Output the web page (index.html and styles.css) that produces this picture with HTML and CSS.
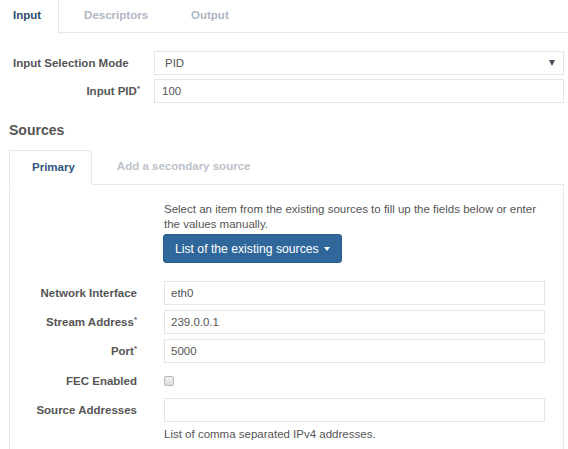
FILE: index.html
```html
<!DOCTYPE html>
<html>
<head>
<meta charset="utf-8">
<link rel="stylesheet" href="styles.css">
</head>
<body>
<nav class="tabs">
  <a class="tab active">Input</a>
  <a class="tab">Descriptors</a>
  <a class="tab">Output</a>
</nav>
<form class="main-form">
  <div class="row">
    <label class="lbl lbl-left">Input Selection Mode</label>
    <div class="select">
      <span>PID</span>
      <span class="caret-dark"></span>
    </div>
  </div>
  <div class="row">
    <label class="lbl">Input PID<sup>*</sup></label>
    <div class="input pid">100</div>
  </div>
</form>
<h3 class="section-title">Sources</h3>
<nav class="subtabs">
  <a class="subtab active">Primary</a>
  <a class="subtab">Add a secondary source</a>
</nav>
<div class="panel">
  <div class="prow">
    <div></div>
    <div class="intro">
      <p>Select an item from the existing sources to fill up the fields below or enter the values manually.</p>
      <button type="button" class="btn">List of the existing sources <span class="caret"></span></button>
    </div>
  </div>
  <div class="fields">
    <div class="prow">
      <label class="plbl">Network Interface</label>
      <div class="input">eth0</div>
    </div>
    <div class="prow">
      <label class="plbl">Stream Address<sup>*</sup></label>
      <div class="input">239.0.0.1</div>
    </div>
    <div class="prow">
      <label class="plbl">Port<sup>*</sup></label>
      <div class="input">5000</div>
    </div>
    <div class="prow fec">
      <label class="plbl">FEC Enabled</label>
      <div><span class="checkbox"></span></div>
    </div>
    <div class="prow">
      <label class="plbl">Source Addresses</label>
      <div class="input"></div>
    </div>
    <div class="prow">
      <div></div>
      <p class="help">List of comma separated IPv4 addresses.</p>
    </div>
  </div>
</div>
</body>
</html>
```
FILE: styles.css
```css
* { box-sizing: border-box; }
html, body { margin: 0; padding: 0; background: #fff; }
body {
  font-family: "Liberation Sans", Arial, sans-serif;
  font-size: 11.5px;
  color: #555;
  overflow: hidden;
}
sup { font-size: 8px; vertical-align: top; position: relative; top: -1px; }
.tabs {
  display: flex;
  height: 33px;
  border-bottom: 1px solid #e8e8e8;
}
.tab {
  display: block;
  height: 33px;
  line-height: 31px;
  font-weight: bold;
  color: #aeb6c1;
  padding: 0 21px;
}
.tab.active {
  color: #2c4a6c;
  padding: 0 17px 0 13px;
  border-right: 1px solid #e8e8e8;
  background: #fff;
  height: 34px;
}
.tab:nth-child(2) { padding: 0 22px 0 25px; }
.main-form { padding-top: 18px; }
.row {
  display: grid;
  grid-template-columns: 154px 410px;
  align-items: center;
  margin-bottom: 4px;
}
.lbl {
  text-align: right;
  padding-right: 14px;
  font-weight: bold;
  color: #555;
}
.lbl-left { text-align: left; padding-left: 13px; }
.select, .input {
  height: 24px;
  border: 1px solid #e4e4e4;
  display: flex;
  align-items: center;
  color: #555;
  background: #fff;
}
.select { padding: 0 8px 0 10px; justify-content: space-between; }
.input { padding: 0 6px; }
.input.pid { padding-left: 7px; }
.caret-dark {
  width: 0; height: 0;
  border-left: 3.5px solid transparent;
  border-right: 3.5px solid transparent;
  border-top: 6px solid #4a5060;
}
.section-title {
  margin: 17px 0 0 9px;
  font-size: 14px;
  font-weight: bold;
  color: #555;
  line-height: 20px;
}
.subtabs {
  display: flex;
  margin: 10px 0 0 9px;
  width: 555px;
  border-bottom: 1px solid #e8e8e8;
  height: 35px;
}
.subtab {
  display: block;
  height: 35px;
  line-height: 32px;
  font-weight: bold;
  color: #bcc2ca;
  padding: 0 23px 0 25px;
}
.subtab.active {
  color: #2f5580;
  padding: 0 16px 0 22px;
  border: 1px solid #e8e8e8;
  border-bottom-color: #fff;
  border-radius: 3px 3px 0 0;
  background: #fff;
  height: 35px;
  margin-bottom: -1px;
  position: relative;
}
.panel {
  margin-left: 9px;
  width: 555px;
  border-left: 1px solid #e8e8e8;
  border-right: 1px solid #e8e8e8;
  padding: 17px 18px 20px 0;
  min-height: 300px;
}
.prow {
  display: grid;
  grid-template-columns: 154px 1fr;
  align-items: center;
}
.intro p {
  margin: 0 0 2px 0;
  line-height: 15px;
  color: #555;
}
.btn {
  font-family: "Liberation Sans", Arial, sans-serif;
  font-size: 12.2px;
  color: #fff;
  background: #30679b;
  border: 1px solid #2a5d8d;
  border-radius: 3px;
  height: 29px;
  padding: 0 11px;
  display: inline-flex;
  align-items: center;
  gap: 5px;
  margin-left: -1px;
}
.caret {
  width: 0; height: 0;
  border-left: 3.5px solid transparent;
  border-right: 3.5px solid transparent;
  border-top: 4px solid #fff;
}
.fields { margin-top: 18px; display: flex; flex-direction: column; gap: 5px; }
.plbl {
  text-align: right;
  padding-right: 27px;
  font-weight: bold;
  color: #555;
}
.fields .input { height: 24px; }
.fec { height: 25px; }
.checkbox {
  display: block;
  width: 10px; height: 10px;
  border: 1px solid #b8b8b8;
  border-radius: 2px;
  background: linear-gradient(#f4f4f4, #dcdcdc);
}
.help { margin: 0; color: #555; line-height: 14px; }
```
